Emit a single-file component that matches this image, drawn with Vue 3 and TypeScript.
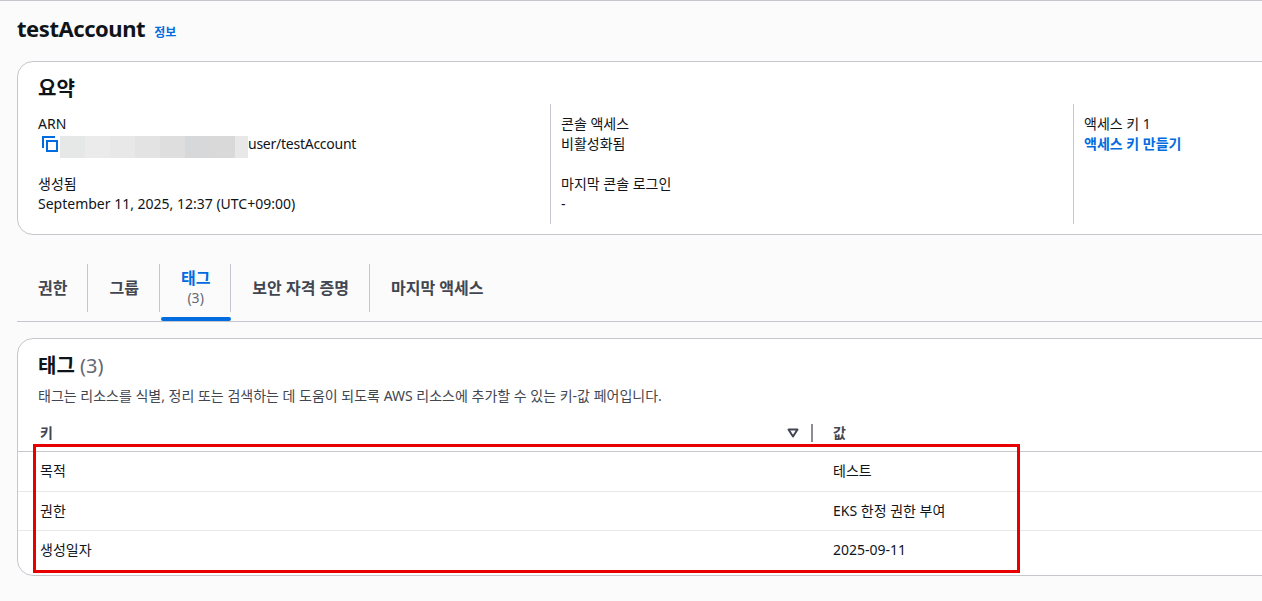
<template>
  <div class="page">
    <div class="title-row">
      <h1>testAccount</h1>
      <a class="info">정보</a>
    </div>

    <section class="card summary">
      <h2>요약</h2>
      <div class="columns">
        <div class="column first">
          <div class="field">
            <div>ARN</div>
            <div class="arn">
              <svg class="copy" width="16" height="16" viewBox="0 0 16 16" fill="none" stroke="#006ce0" stroke-width="2">
                <path d="M1 12V1h12" />
                <rect x="5" y="5" width="10" height="10" />
              </svg>
              <span class="masked"></span>
              <span class="arn-name">user/testAccount</span>
            </div>
          </div>
          <div class="field">
            <div>생성됨</div>
            <div>September 11, 2025, 12:37 (UTC+09:00)</div>
          </div>
        </div>
        <div class="column">
          <div class="field">
            <div>콘솔 액세스</div>
            <div>비활성화됨</div>
          </div>
          <div class="field">
            <div>마지막 콘솔 로그인</div>
            <div>-</div>
          </div>
        </div>
        <div class="column">
          <div class="field">
            <div>액세스 키 1</div>
            <a class="link">액세스 키 만들기</a>
          </div>
        </div>
      </div>
    </section>

    <nav class="tabs">
      <div v-for="tab in tabs" :key="tab.label" class="tab" :class="{ active: tab.count }">
        <div class="tab-inner">
          <span>{{ tab.label }}</span>
          <span v-if="tab.count" class="tab-count">({{ tab.count }})</span>
        </div>
      </div>
    </nav>

    <section class="card tags">
      <h2>태그 <span class="count">(3)</span></h2>
      <p class="desc">태그는 리소스를 식별, 정리 또는 검색하는 데 도움이 되도록 AWS 리소스에 추가할 수 있는 키-값 페어입니다.</p>
      <div class="table-head">
        <div class="col-key">
          <span>키</span>
          <svg class="sort" width="12" height="10" viewBox="0 0 12 10" fill="none" stroke="#424650" stroke-width="2">
            <path d="M1.5 1.5h9L6 8.5z" stroke-linejoin="round" />
          </svg>
          <span class="head-divider"></span>
        </div>
        <div class="col-value">값</div>
      </div>
      <div v-for="row in rows" :key="row.key" class="table-row">
        <div class="col-key">{{ row.key }}</div>
        <div class="col-value">{{ row.value }}</div>
      </div>
    </section>

    <div class="highlight"></div>
  </div>
</template>

<script setup lang="ts">
interface Tab {
  label: string
  count?: number
}

const tabs: Tab[] = [
  { label: '권한' },
  { label: '그룹' },
  { label: '태그', count: 3 },
  { label: '보안 자격 증명' },
  { label: '마지막 액세스' },
]

const rows = [
  { key: '목적', value: '테스트' },
  { key: '권한', value: 'EKS 한정 권한 부여' },
  { key: '생성일자', value: '2025-09-11' },
]
</script>

<style scoped>
.page {
  position: relative;
  box-sizing: border-box;
  width: 1262px;
  height: 601px;
  overflow: hidden;
  padding: 0 0 0 17px;
  border-top: 1px solid #c6c6cd;
  background: #fbfbfb;
  color: #0f141a;
  font-family: "Noto Sans", "Noto Sans CJK KR", sans-serif;
  font-size: 14px;
  line-height: 20px;
}

.title-row {
  display: flex;
  align-items: baseline;
  gap: 9px;
  height: 60px;
  padding-top: 11px;
  box-sizing: border-box;
}

h1 {
  margin: 0;
  font-size: 22px;
  line-height: 32px;
  font-weight: 700;
  letter-spacing: -0.45px;
}

.info {
  color: #006ce0;
  font-size: 12px;
  font-weight: 700;
}

.card {
  box-sizing: border-box;
  width: 1600px;
  background: #fff;
  border: 1px solid #c6c6cd;
  border-radius: 16px;
  padding: 13px 20px;
}

h2 {
  margin: 0;
  font-size: 20px;
  line-height: 28px;
  font-weight: 700;
}

.summary {
  height: 174px;
}

.columns {
  display: flex;
  margin-top: 1px;
}

.column {
  box-sizing: border-box;
  flex: none;
  width: 523px;
  height: 120px;
  padding: 10px 10px 0;
  border-left: 1px solid #c6c6cd;
  display: flex;
  flex-direction: column;
  gap: 20px;
}

.column.first {
  width: 512px;
  padding-left: 0;
  border-left: none;
}

.arn {
  display: flex;
  align-items: center;
  height: 20px;
}

.copy {
  margin: 0 2px 0 4px;
  flex: none;
}

.masked {
  width: 188px;
  height: 22px;
  margin-top: 5px;
  flex: none;
  background: linear-gradient(
    90deg,
    #e6e7e7 0 25px,
    #ebebeb 25px 50px,
    #e8e8e8 50px 75px,
    #e3e3e3 75px 100px,
    #dedede 100px 125px,
    #d7d8d9 125px 150px,
    #d9d9da 150px 175px,
    #e8e8e8 175px 188px
  );
}

.arn-name {
  letter-spacing: -0.25px;
}

.link {
  color: #006ce0;
  font-weight: 700;
}

.tabs {
  display: flex;
  align-items: stretch;
  height: 87px;
  box-sizing: border-box;
  padding: 29px 0 0 0;
  border-bottom: 1px solid #c6c6cd;
}

.tab {
  display: flex;
  align-items: flex-start;
  box-sizing: border-box;
  height: 57px;
  font-size: 16px;
  font-weight: 700;
  color: #424650;
}

.tab-inner {
  display: flex;
  flex-direction: column;
  align-items: center;
  justify-content: center;
  box-sizing: border-box;
  height: 48px;
  padding: 0 20px 0 21px;
  border-right: 1px solid #c6c6cd;
}

.tab:last-child .tab-inner {
  border-right: none;
}

.tab.active {
  position: relative;
  color: #006ce0;
}

.tab.active::after {
  content: "";
  position: absolute;
  left: 1px;
  right: 0;
  bottom: 0;
  height: 4px;
  border-radius: 2px;
  background: #006ce0;
}

.tab.active .tab-inner {
  border-left: 1px solid #c6c6cd;
  margin-left: -1px;
  padding-right: 19.5px;
}

.tab.active + .tab .tab-inner {
  padding-left: 21.5px;
}

.tab-count {
  font-size: 14px;
  font-weight: 400;
  color: #656871;
}

.tags {
  height: 238px;
  margin-top: 16px;
  padding: 13px 0 0;
}

.tags h2,
.desc {
  margin-left: 20px;
}

.count {
  font-weight: 400;
  color: #656871;
}

.desc {
  margin-top: 6px;
  margin-bottom: 0;
  font-size: 14px;
  line-height: 20px;
  color: #424650;
}

.table-head,
.table-row {
  display: flex;
  align-items: center;
  padding-left: 22px;
}

.table-head {
  box-sizing: border-box;
  height: 29px;
  margin-top: 17px;
  padding-bottom: 8px;
  border-bottom: 1px solid #c6c6cd;
  font-size: 14px;
  font-weight: 700;
  color: #424650;
}

.table-row {
  box-sizing: border-box;
  height: 39px;
  padding-bottom: 1px;
  font-size: 14px;
  border-bottom: 1px solid #e8e8ea;
}

.table-head + .table-row {
  height: 40px;
}

.table-row:last-child {
  border-bottom: none;
}

.col-key {
  display: flex;
  align-items: center;
  width: 793px;
  flex: none;
}

.sort {
  margin-left: auto;
}

.head-divider {
  width: 2px;
  height: 18px;
  margin: 0 20px 0 12px;
  background: #8c8c94;
}

.highlight {
  position: absolute;
  left: 33px;
  top: 443px;
  width: 981px;
  height: 123px;
  border: 3px solid #e60000;
}
</style>

<style>
html,
body {
  margin: 0;
  overflow: hidden;
}
</style>
